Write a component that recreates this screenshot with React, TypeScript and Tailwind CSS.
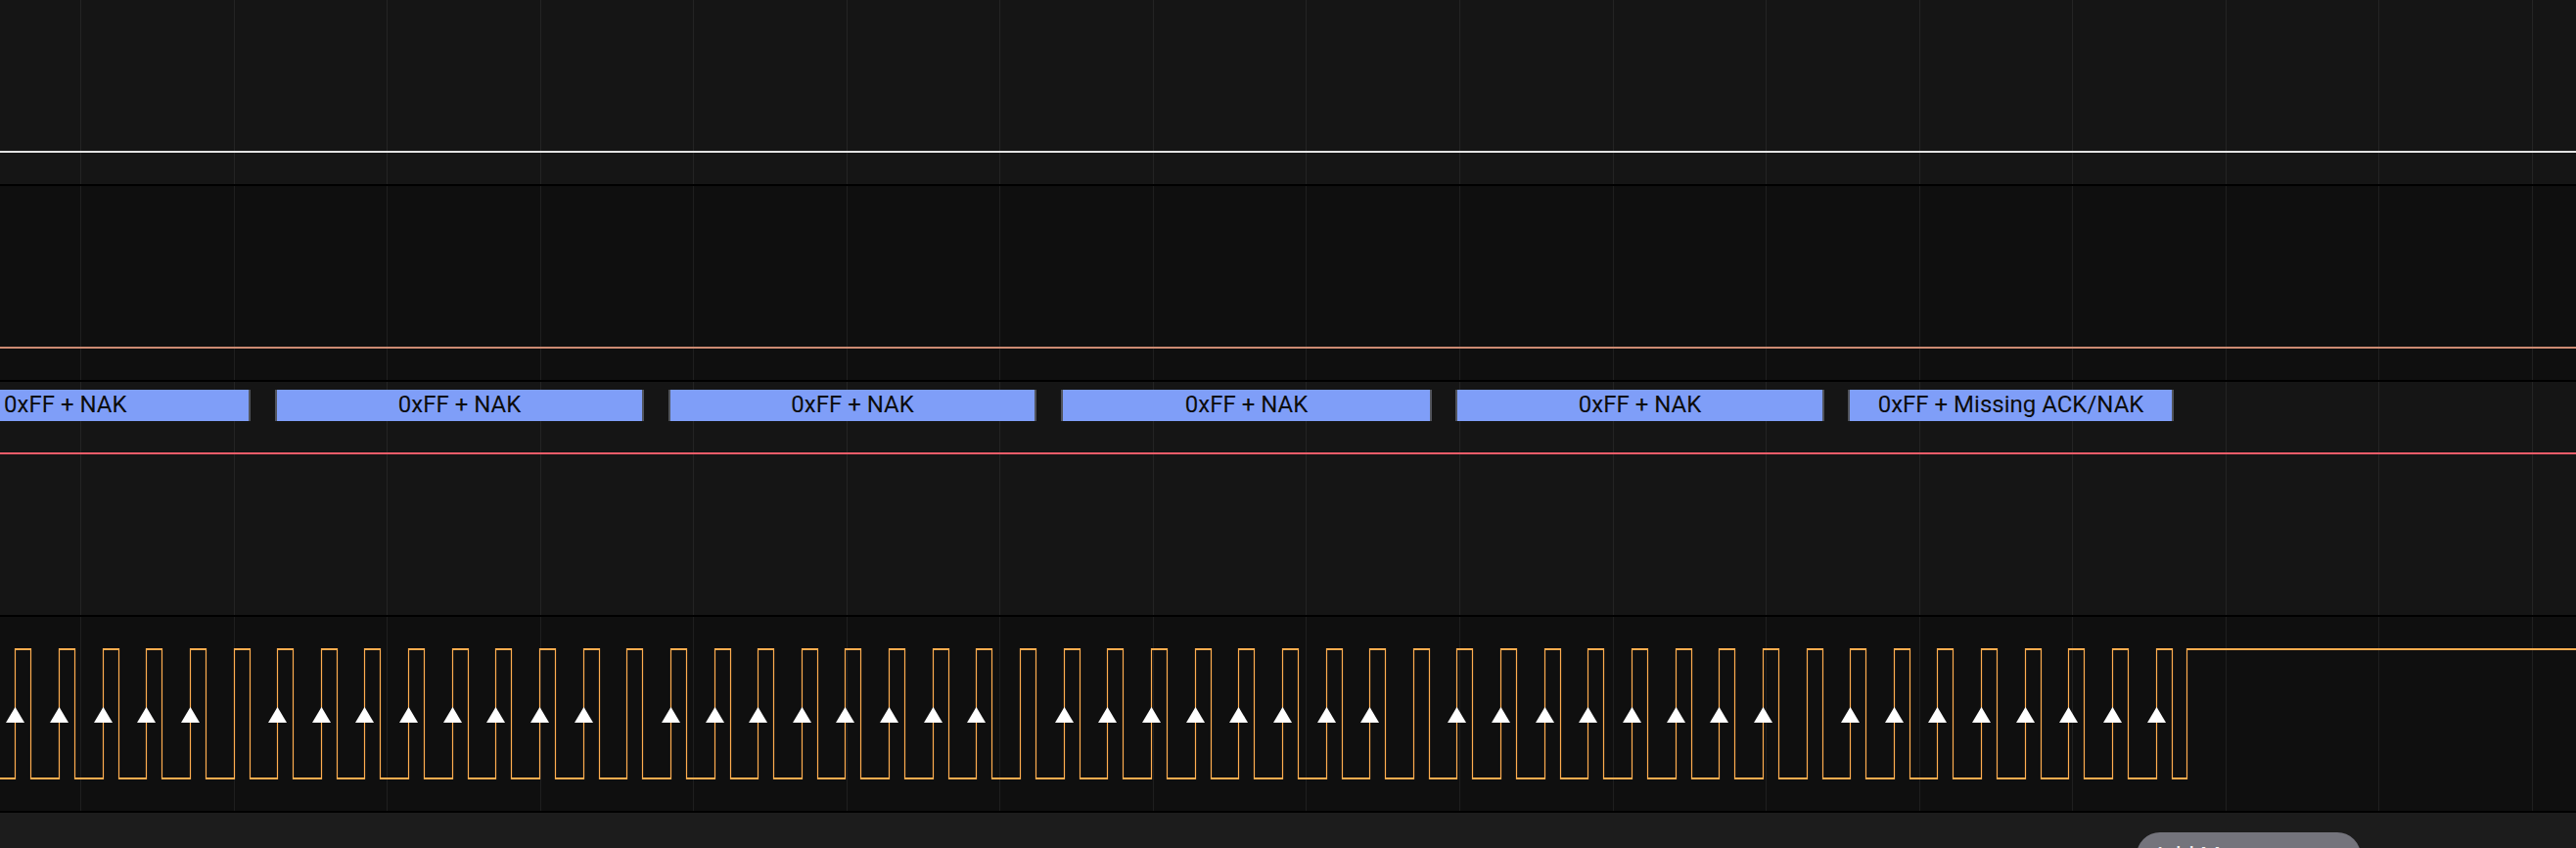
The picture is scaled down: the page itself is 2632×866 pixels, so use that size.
import React from "react";

const W = 2632;
const GRID = Array.from({ length: 17 }, (_, i) => 82 + i * 156.55);

function Grid({ h }: { h: number }) {
  return (
    <svg className="absolute inset-0 pointer-events-none" width={W} height={h}>
      {GRID.map((x, i) => (
        <line key={i} x1={Math.round(x) + 0.5} x2={Math.round(x) + 0.5} y1={0} y2={h} stroke="rgba(255,255,255,0.065)" strokeWidth={1} />
      ))}
    </svg>
  );
}

const PERIOD = 44.64;
const HIGH = 16;
const rises = Array.from({ length: 50 }, (_, k) => Math.round(15.3 + PERIOD * k));
const FINAL_RISE = 2234;
const HI_Y = 33;
const LO_Y = 165;

function Clock() {
  let horiz = `M0,${LO_Y} H${rises[0]}`;
  let vert = "";
  rises.forEach((r, i) => {
    const f = r + HIGH;
    const next = i + 1 < rises.length ? rises[i + 1] : FINAL_RISE;
    horiz += ` M${r},${HI_Y} H${f} M${f},${LO_Y} H${next}`;
    vert += ` M${r + 0.5},${HI_Y - 1} V${LO_Y + 1} M${f + 0.5},${HI_Y - 1} V${LO_Y + 1}`;
  });
  horiz += ` M${FINAL_RISE},${HI_Y} H${W}`;
  vert += ` M${FINAL_RISE + 0.5},${HI_Y - 1} V${LO_Y + 1}`;
  const arrows = rises.filter((_, k) => k % 9 !== 5);
  return (
    <svg className="absolute inset-0" width={W} height={198}>
      <path d={horiz} stroke="#ffad4f" strokeWidth={2} fill="none" />
      <path d={vert} stroke="#ffad4f" strokeWidth={1.2} fill="none" />
      {arrows.map((x, i) => (
        <polygon key={i} points={`${x - 9},108 ${x + 0.5},92 ${x + 10},108`} fill="#ffffff" />
      ))}
    </svg>
  );
}

const bubbles = [
  { left: 281, width: 377, label: "0xFF + NAK" },
  { left: 683, width: 376, label: "0xFF + NAK" },
  { left: 1084, width: 379, label: "0xFF + NAK" },
  { left: 1487, width: 377, label: "0xFF + NAK" },
  { left: 1888, width: 333, label: "0xFF + Missing ACK/NAK" },
];

export default function App() {
  return (
    <div
      className="w-[2632px] h-[866px] overflow-hidden flex flex-col bg-[#1c1c1c]"
      style={{ fontFamily: "Roboto, 'Noto Sans', sans-serif" }}
    >
      {/* Channel 1 */}
      <div className="relative h-[188px] bg-[#151515] shrink-0">
        <Grid h={188} />
        <div className="absolute left-0 right-0 top-[154px] h-[2px] bg-[#e2e2e2]" />
      </div>
      <div className="h-[2px] bg-black shrink-0" />

      {/* Channel 2 */}
      <div className="relative h-[198px] bg-[#0f0f0f] shrink-0">
        <Grid h={198} />
        <div className="absolute left-0 right-0 top-[164px] h-[2px] bg-[#cc8a72]" />
      </div>
      <div className="h-[2px] bg-black shrink-0" />

      {/* Channel 3 - I2C SDA with protocol bubbles */}
      <div className="relative h-[238px] bg-[#151515] shrink-0">
        <Grid h={238} />
        <div className="absolute left-0 w-[256px] top-[8px] h-[32px] bg-[#7f9ef8] border-r-2 border-[#51545c] flex items-center pl-[4px] pb-[2px]">
          <span className="text-[24px] leading-none text-[#0c0c0c] whitespace-nowrap">0xFF + NAK</span>
        </div>
        {bubbles.map((b, i) => (
          <div
            key={i}
            className="absolute top-[8px] h-[32px] bg-[#7f9ef8] border-x-2 border-[#51545c] flex items-center justify-center pb-[2px]"
            style={{ left: b.left, width: b.width }}
          >
            <span className="text-[24px] leading-none text-[#0c0c0c] whitespace-nowrap">{b.label}</span>
          </div>
        ))}
        <div className="absolute left-0 right-0 top-[72px] h-[2px] bg-[#f25c69]" />
      </div>
      <div className="h-[2px] bg-black shrink-0" />

      {/* Channel 4 - clock */}
      <div className="relative h-[198px] bg-[#0f0f0f] shrink-0">
        <Grid h={198} />
        <Clock />
      </div>
      <div className="h-[2px] bg-black shrink-0" />

      {/* Bottom strip */}
      <div className="relative flex-1 bg-[#1c1c1c]">
        <div className="absolute left-[2183px] top-[20px] w-[229px] h-[48px] rounded-[24px] bg-[#74747c] flex items-center justify-center">
          <span className="text-[24px] leading-none text-[#f0f0f0] whitespace-nowrap">Add Measurement</span>
        </div>
      </div>
    </div>
  );
}
